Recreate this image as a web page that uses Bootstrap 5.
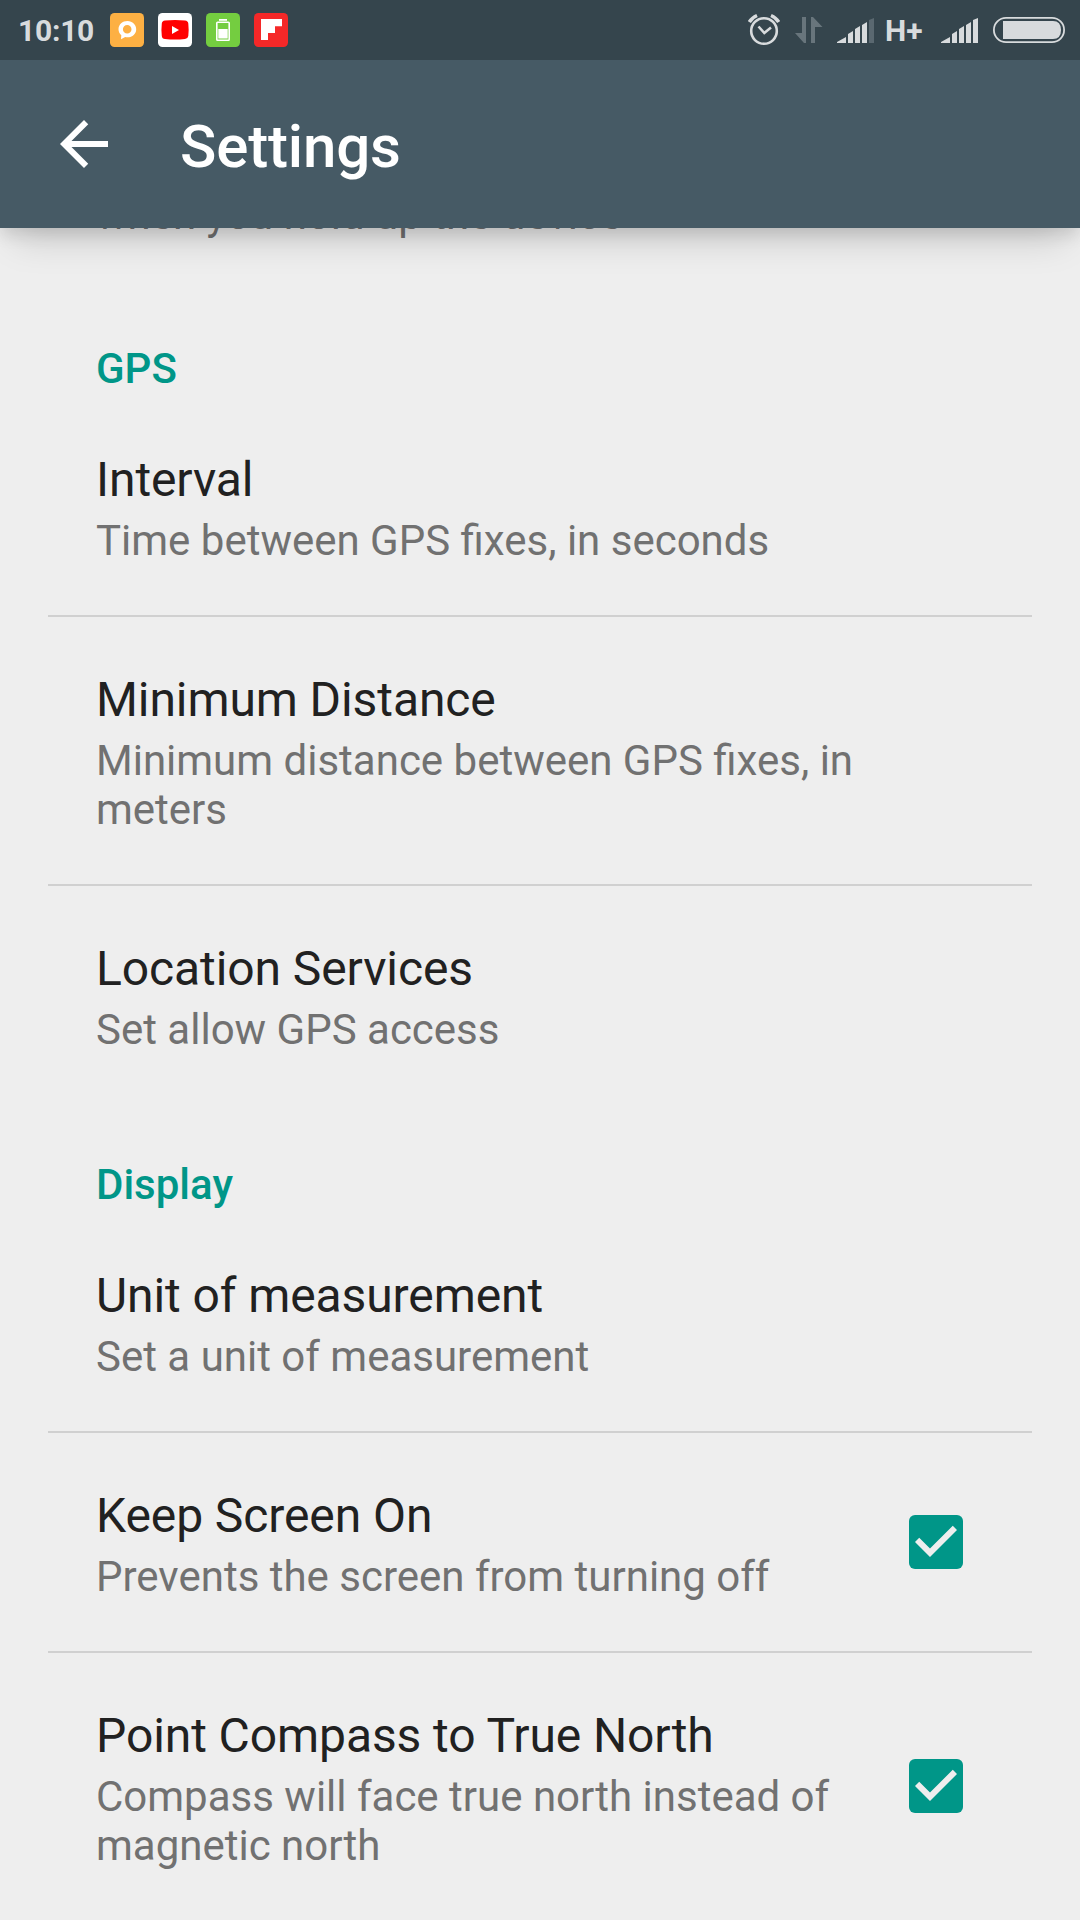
<!DOCTYPE html>
<html lang="en">
<head>
<meta charset="utf-8">
<meta name="viewport" content="width=device-width, initial-scale=1">
<title>Settings</title>
<link rel="stylesheet" href="https://cdn.jsdelivr.net/npm/bootstrap@5.3.0/dist/css/bootstrap.min.css">
<style>
body{font-family:Roboto,"Noto Sans",sans-serif;background:#eee;width:1080px;height:1920px;overflow:hidden}
svg{display:block;flex:none}
.status-bar{height:60px;background:#35454d;color:#d8dbdd;padding:0 15px 0 18px;position:relative;z-index:3}
.clock{font-size:30px;font-weight:700;line-height:60px;width:92px;letter-spacing:-.25px;padding-top:1px}
.app-icons{gap:14px}
.data-arrows{margin:0 14px 0 15px}
.net-type{font-size:30px;font-weight:700;line-height:60px;width:59px;padding:1px 0 0 11px}
.battery{margin-left:15px}
.app-bar{height:168px;background:#465a65;box-shadow:0 6px 16px rgba(0,0,0,.12),0 26px 34px -14px rgba(0,0,0,.15);padding-left:48px;position:relative;z-index:2}
.app-title{font-size:60px;font-weight:500;line-height:70px;color:#fff;margin:5px 0 0 60px;letter-spacing:-.15px}
.pane{padding:0 48px}
.section-title{color:#009688;font-size:42px;font-weight:500;line-height:49px;margin:56px 0 4px;padding:0 48px}
.pref{padding:55px 48px 50px}
.pref + .pref{border-top:2px solid #d0d0d0}
.pref.scrolled{padding:0 48px 49px;margin-top:-38px}
.pref-check{padding-right:69px}
.pref-check:last-child{padding-bottom:48px}
.pref-check svg{margin-bottom:6px}
.pref-title{font-size:48px;line-height:56px;color:#212121;margin-bottom:8px;letter-spacing:-.09px}
.summary{font-size:42px;line-height:49px;color:#717171}
</style>
</head>
<body>
<svg width="0" height="0" class="position-absolute">
<symbol id="check" viewBox="0 0 18 18"><rect width="18" height="18" rx="2" fill="#009688"/><path d="M7 14 2 9l1.410-1.410L7 11.170l7.590-7.590L16 5z" fill="#eee"/></symbol>
</svg>
<header class="status-bar d-flex align-items-center">
<span class="clock">10:10</span>
<div class="app-icons d-flex">
<svg width="34" height="34" viewBox="0 0 34 34"><rect width="34" height="34" rx="4.500" fill="#fdb043"/><path fill="#fff" fill-rule="evenodd" d="M17.500 8c-5 0-9 3.500-9 8.200 0 2.600 1.200 4.600 2.800 6l-.3 4 4.200-2.100c.8.200 1.500.200 2.300.200 5 0 8.700-3.600 8.700-8.100S22.500 8 17.500 8zm-.3 4a4.300 4.300 0 1 1 0 8.600 4.300 4.300 0 0 1 0-8.600z"/></svg>
<svg width="34" height="34" viewBox="0 0 34 34"><rect width="34" height="34" rx="4.500" fill="#fff"/><path fill="#f00" d="M7 7.500Q17 6.500 27 7.500q3 .3 3.300 3 .7 6 0 12.500-.4 2.800-3.300 3.100-10 1-20 0-2.900-.3-3.200-3.100-.7-6.500 0-12.500.3-2.700 3.200-3z"/><path fill="#fff" d="m14 13 7 4-7 4z"/></svg>
<svg width="34" height="34" viewBox="0 0 34 34"><rect width="34" height="34" rx="4.500" fill="#74cd40"/><path fill="#fff" d="M13 6h8v1.800h-8z"/><rect x="10.800" y="9.300" width="12.400" height="18" rx=".8" fill="none" stroke="#fff" stroke-width="1.600"/><path fill="#fff" d="M12.300 16h9.400v9.500h-9.400z"/></svg>
<svg width="34" height="34" viewBox="0 0 34 34"><rect width="34" height="34" rx="4.500" fill="#f52828"/><path fill="#fff" d="M7 6h21v7.200h-7V20h-7v7H7z"/></svg>
</div>
<div class="d-flex align-items-center ms-auto">
<svg width="32" height="60" viewBox="748 0 32 60" fill="none" stroke="#d8dbdd"><circle cx="764" cy="31" r="12.800" stroke-width="2.600"/><path stroke-width="3.500" d="M749.300 22q2.500-4.300 7.700-6.500M778.700 22q-2.500-4.300-7.700-6.500"/><path stroke-width="2.600" d="m758.500 26.500 5.800 6.500 6.700-5.500"/></svg>
<svg class="data-arrows" width="28" height="60" viewBox="795 0 28 60" fill="#68757c"><path d="M802 17h4v26h-2L795 33h7zM811 17h2l9.500 10H815v16h-4z"/></svg>
<svg width="37" height="60" viewBox="0 0 37 60" fill="#d8dbdd"><path d="M0 43v-1l9-5v6zM11 43V34l5-3v12zM18 43V29l5-3v17zM25 43V25l5-3v21z"/><path d="M32 43V20l5-2v25z" fill="#5a6870"/></svg>
<span class="net-type">H+</span>
<svg width="37" height="60" viewBox="0 0 37 60" fill="#d8dbdd" class="ms-2"><path d="M0 43v-1l9-5v6zM11 43V34l5-3v12zM18 43V29l5-3v17zM25 43V25l5-3v21zM32 43V20l5-2v25z"/></svg>
<svg class="battery" width="72" height="60" viewBox="993 0 72 60"><rect x="993.900" y="17.900" width="70.200" height="24.200" rx="12.100" fill="none" stroke="#d8dbdd" stroke-width="1.800"/><path fill="#d8dbdd" d="M1003 21h50q8 0 8 9t-8 9h-50z"/></svg>
</div>
</header>
<nav class="app-bar d-flex align-items-center">
<svg width="72" height="72" viewBox="0 0 24 24" fill="#fff"><path d="M20 11H7.830l5.590-5.590L12 4l-8 8 8 8 1.410-1.410L7.830 13H20z"/></svg>
<h1 class="app-title">Settings</h1>
</nav>
<main class="pane">
<div class="pref scrolled"><div class="summary">when you hold up the device</div></div>
<h2 class="section-title">GPS</h2>
<div class="pref"><div class="pref-title">Interval</div><div class="summary">Time between GPS fixes, in seconds</div></div>
<div class="pref"><div class="pref-title">Minimum Distance</div><div class="summary">Minimum distance between GPS fixes, in meters</div></div>
<div class="pref"><div class="pref-title">Location Services</div><div class="summary">Set allow GPS access</div></div>
<h2 class="section-title">Display</h2>
<div class="pref"><div class="pref-title">Unit of measurement</div><div class="summary">Set a unit of measurement</div></div>
<div class="pref pref-check d-flex align-items-center">
<div class="flex-grow-1 pe-5"><div class="pref-title">Keep Screen On</div><div class="summary">Prevents the screen from turning off</div></div>
<svg width="54" height="54"><use href="#check"/></svg>
</div>
<div class="pref pref-check d-flex align-items-center">
<div class="flex-grow-1 pe-5"><div class="pref-title">Point Compass to True North</div><div class="summary">Compass will face true north instead of magnetic north</div></div>
<svg width="54" height="54"><use href="#check"/></svg>
</div>
</main>
<script src="https://cdn.jsdelivr.net/npm/bootstrap@5.3.0/dist/js/bootstrap.bundle.min.js"></script>
</body>
</html>
